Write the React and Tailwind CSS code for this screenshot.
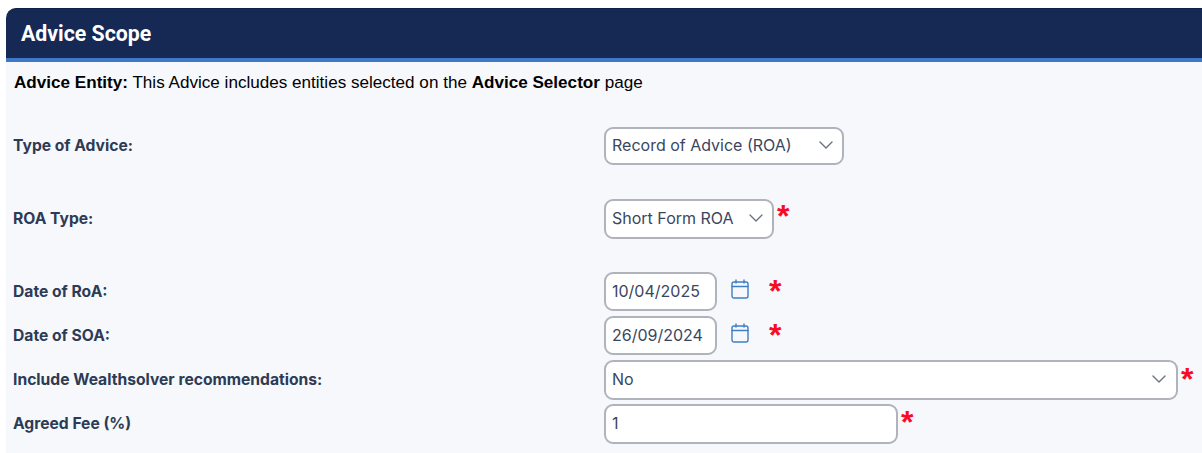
import React from 'react';

const Chevron = () => (
  <svg width="14" height="8" viewBox="0 0 14 8" fill="none" stroke="#6b7280" strokeWidth="1.4" strokeLinecap="round" strokeLinejoin="round" className="shrink-0">
    <path d="M1 1l6 6 6-6" />
  </svg>
);

const CalendarIcon = () => (
  <svg width="18" height="20" viewBox="0 0 18 20" fill="none" stroke="#3f7fc4" strokeWidth="1.4" strokeLinecap="round" className="shrink-0">
    <rect x="1" y="3" width="16" height="16" rx="2" />
    <path d="M1 7.5h16M5 1v3M13 1v3" />
  </svg>
);

const Star = ({ className }) => (
  <span className={`text-[32px] leading-none font-bold text-[#fb0a25] font-['Liberation_Sans',sans-serif] ${className}`}>*</span>
);

const Row = ({ label, className, children }) => (
  <div className={`flex items-center ${className}`}>
    <label className="w-[591px] shrink-0 text-[15.65px] font-bold text-[#2d3b55] font-['Inter',sans-serif]">{label}</label>
    {children}
  </div>
);

const boxClass = "flex items-center border-2 border-[#b0b2bc] rounded-[9px] bg-white px-[6px] pb-[2px] text-[16px] text-[#3a4660] font-['Inter',sans-serif]";

export default function App() {
  return (
    <div className="min-h-screen bg-white pt-2 pl-[6px] overflow-hidden">
      <div className="h-[50px] flex items-center rounded-tl-[10px] bg-[#162955] pl-[15px] border-t border-[#0f2048]">
        <h1 className="text-[21.3px] font-bold text-white font-['Roboto',sans-serif]">Advice Scope</h1>
      </div>
      <div className="h-1 bg-[#3f78c6]"></div>
      <div className="bg-[#f6f8fc] pl-[7px] h-[391px]">
        <p className="pt-[12px] pl-[1px] h-[65px] text-[17.1px] leading-[18px] text-black font-['Liberation_Sans',sans-serif]">
          <b>Advice Entity:</b> This Advice includes entities selected on the <b>Advice Selector</b> page
        </p>
        <Row label="Type of Advice:" className="h-[38px] mb-[34px]">
          <div className={`${boxClass} w-[240px] h-[38px] justify-between pr-[9px]`}>
            <span>Record of Advice (ROA)</span>
            <Chevron />
          </div>
        </Row>
        <Row label="ROA Type:" className="h-[40px] mb-[33px]">
          <div className={`${boxClass} w-[170px] h-[40px] justify-between pr-[9px]`}>
            <span>Short Form ROA</span>
            <Chevron />
          </div>
          <Star className="self-start ml-[3px] mt-[1px]" />
        </Row>
        <Row label="Date of RoA:" className="h-[39px] mb-[5px]">
          <div className={`${boxClass} w-[113px] h-[39px]`}>10/04/2025</div>
          <span className="ml-[14px] -mt-[5px]"><CalendarIcon /></span>
          <Star className="self-start ml-[20px] mt-[3px]" />
        </Row>
        <Row label="Date of SOA:" className="h-[39px] mb-[5px]">
          <div className={`${boxClass} w-[113px] h-[39px]`}>26/09/2024</div>
          <span className="ml-[14px] -mt-[5px]"><CalendarIcon /></span>
          <Star className="self-start ml-[20px] mt-[3px]" />
        </Row>
        <Row label="Include Wealthsolver recommendations:" className="h-[40px] mb-[4px]">
          <div className={`${boxClass} w-[574px] h-[40px] justify-between pr-[10px]`}>
            <span>No</span>
            <Chevron />
          </div>
          <Star className="self-start ml-[3px] mt-[3px]" />
        </Row>
        <Row label="Agreed Fee (%)" className="h-[40px]">
          <div className={`${boxClass} w-[294px] h-[40px]`}>1</div>
          <Star className="self-start ml-[3px] mt-[2px]" />
        </Row>
      </div>
    </div>
  );
}
